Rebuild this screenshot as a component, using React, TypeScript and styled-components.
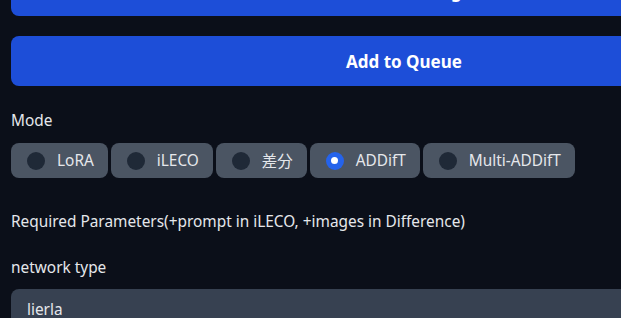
import React, { useState } from 'react';
import styled, { createGlobalStyle } from 'styled-components';

const GlobalStyle = createGlobalStyle`
  html, body {
    margin: 0;
    padding: 0;
    background: #0b0f19;
    overflow: hidden;
  }
  body {
    font-family: "Noto Sans", "Noto Sans CJK JP", sans-serif;
    color: #e5e7eb;
  }
`;

const Page = styled.div`
  width: 786px;
  margin-top: -34px;
  padding-left: 11px;
  display: flex;
  flex-direction: column;
`;

const PrimaryButton = styled.button`
  height: 50px;
  width: 100%;
  border: none;
  border-radius: 8px;
  background: #1d4ed8;
  color: #ffffff;
  font-family: "Noto Sans", sans-serif;
  font-weight: 700;
  font-size: 17px;
  margin-bottom: 20px;
  cursor: pointer;
`;

const Label = styled.div<{ $gap?: number }>`
  font-size: 15.4px;
  line-height: 20px;
  color: #e5e7eb;
  margin-top: ${(p) => p.$gap ?? 0}px;
`;

const RadioGroup = styled.div`
  display: flex;
  gap: 3px;
  margin-top: 12px;
`;

const Chip = styled.label`
  display: flex;
  align-items: center;
  gap: 12px;
  height: 35px;
  padding: 0 14px 0 16px;
  border-radius: 8px;
  background: #4b5563;
  font-size: 15.4px;
  color: #e5e7eb;
  cursor: pointer;
  box-sizing: border-box;
`;

const Dot = styled.span<{ $checked: boolean }>`
  width: 18px;
  height: 18px;
  border-radius: 50%;
  background: ${(p) => (p.$checked ? '#2563eb' : '#1f2937')};
  display: flex;
  align-items: center;
  justify-content: center;
  flex-shrink: 0;
  &::after {
    content: '';
    width: 7px;
    height: 7px;
    border-radius: 50%;
    background: #ffffff;
    display: ${(p) => (p.$checked ? 'block' : 'none')};
  }
`;

const TextInput = styled.div`
  margin-top: 11px;
  height: 44px;
  border-radius: 8px;
  background: #374151;
  padding: 10px 16px;
  font-size: 15.4px;
  color: #e5e7eb;
  box-sizing: border-box;
`;

const modes = ['LoRA', 'iLECO', '差分', 'ADDifT', 'Multi-ADDifT'];

export default function App() {
  const [mode, setMode] = useState('ADDifT');
  return (
    <>
      <GlobalStyle />
      <Page>
        <PrimaryButton>Start Training</PrimaryButton>
        <PrimaryButton>Add to Queue</PrimaryButton>
        <Label $gap={5}>Mode</Label>
        <RadioGroup>
          {modes.map((m) => (
            <Chip key={m} onClick={() => setMode(m)}>
              <Dot $checked={mode === m} />
              {m}
            </Chip>
          ))}
        </RadioGroup>
        <Label $gap={34}>Required Parameters(+prompt in iLECO, +images in Difference)</Label>
        <Label $gap={26}>network type</Label>
        <TextInput>lierla</TextInput>
      </Page>
    </>
  );
}
